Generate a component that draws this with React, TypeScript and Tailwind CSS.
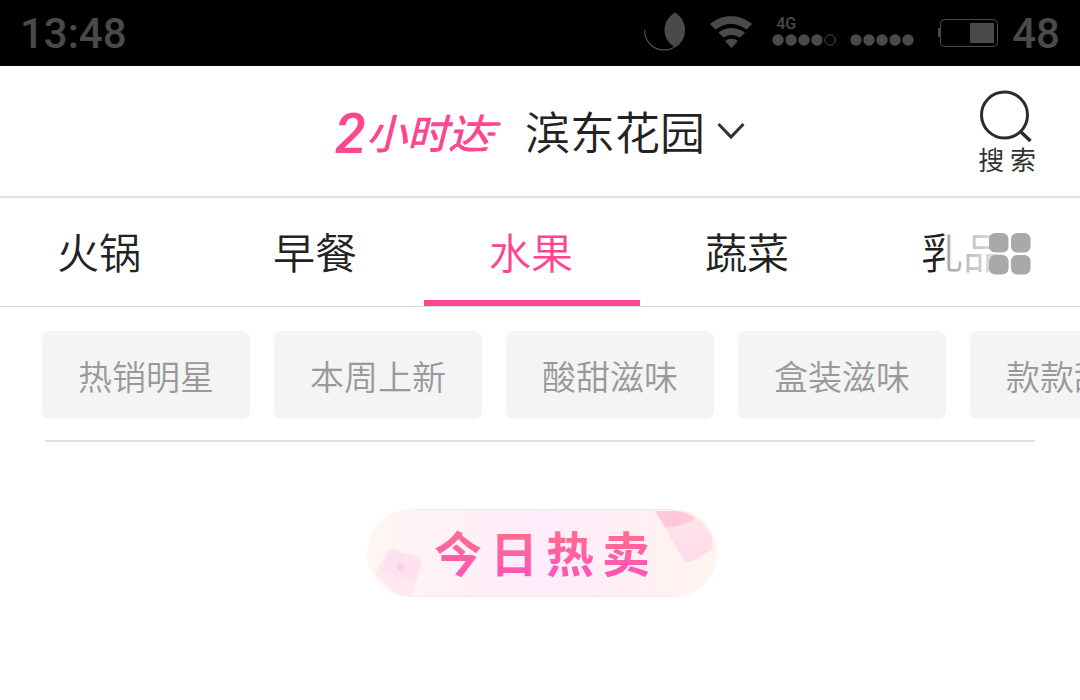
import React from "react";

const tabs = ["火锅", "早餐", "水果", "蔬菜", "乳品"];
const filters = ["热销明星", "本周上新", "酸甜滋味", "盒装滋味", "款款甜蜜"];

function MoonIcon() {
  return (
    <svg viewBox="0 0 42 40" className="h-10 w-[42px]" aria-hidden="true">
      <path d="M0.8 18C0 28 8 38 20 38C25 38 28 37 31 34.500" fill="none" stroke="#4a4a4a" strokeWidth="1.300" />
      <path d="M31 0.500C38 5 41 11 41 18.500C41 26 37 32 31 35.500C24 31 20.500 25 20.500 18C20.500 11 24 5 31 0.500Z" fill="#4a4a4a" />
    </svg>
  );
}

function WifiIcon() {
  return (
    <svg viewBox="0 0 42 32" className="h-8 w-[42px]" aria-hidden="true" fill="#4a4a4a">
      <path d="M0 8C12-2.500 30-2.500 42 8L36.500 13.500C27 6 15 6 5.500 13.500Z" />
      <path d="M8.500 16.500C16 10.500 26 10.500 35 16.500L30 21.500C25 18 18 18 13.500 21.500Z" />
      <path d="M15 25C19 22 24 22 28 25L21.500 32Z" />
    </svg>
  );
}

function SignalDots({ filled }: { filled: number }) {
  return (
    <svg viewBox="0 0 64 12" className="h-3 w-16" aria-hidden="true">
      {[0, 1, 2, 3, 4].map((i) =>
        i < filled ? (
          <circle key={i} cx={6 + i * 13} cy="6" r="5.700" fill="#4a4a4a" />
        ) : (
          <circle key={i} cx={6 + i * 13} cy="6" r="5.200" fill="none" stroke="#4a4a4a" />
        ),
      )}
    </svg>
  );
}

function BatteryIcon() {
  return (
    <svg viewBox="0 0 60 28" className="h-7 w-[60px]" aria-hidden="true">
      <rect x="2.500" y="0.500" width="57" height="27" rx="4" fill="none" stroke="#4a4a4a" />
      <rect x="0" y="9" width="2.500" height="9" fill="#4a4a4a" />
      <rect x="32" y="4" width="24" height="20" fill="#4a4a4a" />
    </svg>
  );
}

function StatusBar() {
  return (
    <div className="flex h-[66px] items-center justify-between bg-black px-5 pt-0.5 font-['Roboto',sans-serif] text-[42px] leading-[64px] font-medium text-[#4a4a4a]">
      <span>13:48</span>
      <div className="flex items-center">
        <span className="pb-1">
          <MoonIcon />
        </span>
        <span className="ml-6 pb-1">
          <WifiIcon />
        </span>
        <div className="ml-5 flex flex-col pb-2">
          <span className="ml-1 text-base leading-5">4G</span>
          <SignalDots filled={4} />
        </div>
        <div className="ml-3.5 pt-3">
          <SignalDots filled={5} />
        </div>
        <span className="ml-6 pb-0.5">
          <BatteryIcon />
        </span>
        <span className="ml-3.5">48</span>
      </div>
    </div>
  );
}

function Header() {
  return (
    <header className="grid h-[132px] grid-cols-[1fr_auto_1fr] items-center border-b-2 border-[#e2e2e2]">
      <div />
      <div className="flex items-center">
        <div className="flex items-center leading-[60px] font-medium text-[#fd4690] italic">
          <span className="pt-1.5 font-['Roboto',sans-serif] text-[56px]">2</span>
          <span className="text-[41px]">小时达</span>
          <svg viewBox="0 0 20 32" className="-ml-2 h-8 w-5" aria-hidden="true" fill="none" stroke="currentColor" strokeWidth="3.500" strokeLinecap="round">
            <path d="M12 9H18M8 19H13" />
          </svg>
        </div>
        <button type="button" className="ml-6 flex items-center gap-3 text-[45px] leading-[60px] font-[350] text-[#222]">
          滨东花园
          <svg viewBox="0 0 28 18" className="h-[18px] w-7" aria-hidden="true" fill="none" stroke="#333" strokeWidth="3">
            <path d="M1.500 2L14 15L26.500 2" />
          </svg>
        </button>
      </div>
      <button type="button" className="mr-11 flex flex-col items-center justify-self-end pt-0.5 text-[26px] leading-8 text-[#333]">
        <svg viewBox="0 0 54 54" className="h-[54px] w-[54px]" aria-hidden="true" fill="none" stroke="#2b2b2b" strokeWidth="3">
          <circle cx="24.500" cy="26" r="23" />
          <path d="M41 43L50.500 52" strokeWidth="3.500" />
        </svg>
        搜 索
      </button>
    </header>
  );
}

function CategoryTabs() {
  return (
    <nav className="relative overflow-hidden border-b border-[#dcdcdc]">
      <div className="-ml-2 flex">
        {tabs.map((tab) => (
          <a
            key={tab}
            href={"#" + tab}
            className={
              tab === "水果"
                ? "w-[216px] shrink-0 border-b-6 border-[#fd4690] pt-1 pr-0.5 text-center text-[42px] leading-[98px] font-[350] text-[#fd4690]"
                : "w-[216px] shrink-0 border-b-6 border-transparent pt-1 pr-0.5 text-center text-[42px] leading-[98px] font-[350] text-[#222]"
            }
          >
            {tab}
          </a>
        ))}
      </div>
      <button
        type="button"
        aria-label="全部分类"
        className="absolute inset-y-0 right-0 flex w-[135px] items-center justify-end bg-linear-to-r from-white/60 to-white to-60% pt-1 pr-[49px]"
      >
        <svg viewBox="0 0 42 42" className="h-[42px] w-[42px]" aria-hidden="true" fill="#a9a9a9">
          <rect x="0" y="0" width="19.500" height="19.500" rx="6" />
          <rect x="22" y="0" width="19.500" height="19.500" rx="6" />
          <rect x="0" y="22" width="19.500" height="19.500" rx="6" />
          <rect x="22" y="22" width="19.500" height="19.500" rx="6" />
        </svg>
      </button>
    </nav>
  );
}

function FilterChips() {
  return (
    <div className="flex gap-6 overflow-hidden pt-6 pl-[42px]">
      {filters.map((name) => (
        <button
          key={name}
          type="button"
          className="h-[88px] w-52 shrink-0 rounded-lg bg-[#f4f4f4] text-[34px] font-[350] text-[#999]"
        >
          {name}
        </button>
      ))}
    </div>
  );
}

function HotBanner() {
  return (
    <div className="flex justify-center pt-[67px] pl-1">
      <h2 className="relative w-[350px] overflow-hidden rounded-full bg-linear-to-r from-[#fff6f2] via-[#ffecfb] to-[#fff4ee] pb-1 text-center text-5xl leading-[84px] font-bold">
        <svg viewBox="0 0 350 88" className="absolute inset-0 h-full w-full" aria-hidden="true">
          <defs>
            <linearGradient id="petal" x1="0" y1="0" x2="0" y2="1">
              <stop offset="0" stopColor="#ffe4e6" />
              <stop offset="1" stopColor="#ffdaec" />
            </linearGradient>
          </defs>
          <path d="M20 42L48 49Q55 51 54 58L44 88H32L8 64Z" fill="#ffe8f0" />
          <path d="M24 40L49 47Q56 49 54 56L49 67Q46 71 40 70L14 62Z" fill="#ffe0ee" />
          <circle cx="34" cy="58" r="4" fill="#ffcfe5" />
          <path d="M288 2H310C326 3 338 14 345 28L346 40L326 52Q319 55 315 48Z" fill="url(#petal)" />
          <path d="M288 2H308Q320 3 328 9Q313 19 298 18Z" fill="#ffc8d8" />
          <path d="M44 0.500H306M44 87.500H306" stroke="#ffe6ea" />
        </svg>
        <span className="relative bg-linear-to-b from-[#ff6b91] from-30% to-[#ff55b5] to-80% bg-clip-text pl-2 tracking-[8px] text-transparent">
          今日热卖
        </span>
      </h2>
    </div>
  );
}

export default function App() {
  return (
    <div className="min-h-screen overflow-hidden bg-white font-['Noto_Sans_CJK_SC',sans-serif]">
      <StatusBar />
      <Header />
      <CategoryTabs />
      <main>
        <FilterChips />
        <hr className="mx-[45px] mt-[21px] border-t-2 border-[#e2e2e2]" />
        <HotBanner />
      </main>
    </div>
  );
}
